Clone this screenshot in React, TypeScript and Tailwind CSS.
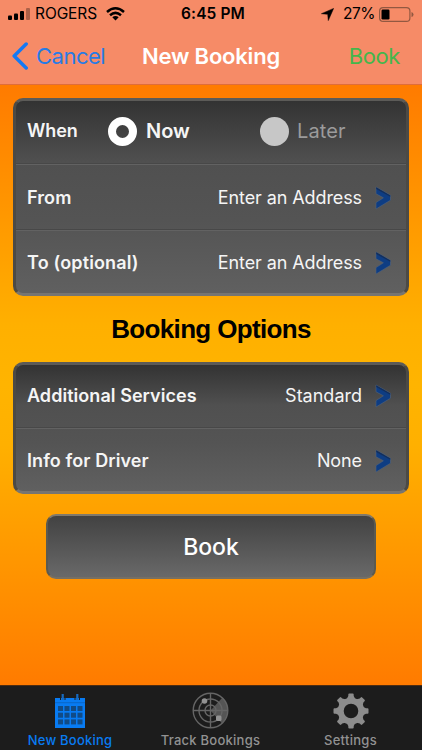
import React from "react";

function Chevron() {
  return (
    <svg className="ml-[13px] h-[24px] w-[17px] shrink-0" viewBox="0 0 17 24">
      <path d="M1 1 L15.5 9.2 V14.2 L1 23 V16.6 L8.4 11.8 L1 7.8 Z" fill="#0e3d83" stroke="#53637a" strokeWidth="0.6" />
      <path d="M1.2 1.2 L15.3 9.4 V10.8 L1.2 3 Z" fill="#142f5b" />
    </svg>
  );
}

function Row({ label, value, labelClass, valueClass, className }: { label: string; value: string; labelClass: string; valueClass: string; className: string }) {
  return (
    <div className={"flex items-center pl-[11px] pr-[14px] " + className}>
      <span className={"flex-1 font-semibold " + labelClass}>{label}</span>
      <span className={valueClass}>{value}</span>
      <Chevron />
    </div>
  );
}

const divider = "border-b border-[#484848] shadow-[0_1px_0_#626262]";
const card = "mx-[13px] rounded-[10px] border-[3px] border-t-[#5c5b58] border-x-[#4c4a45] border-b-[#777571] bg-[linear-gradient(#333_0%,#505050_32%,#545454_62%,#606060_100%)] text-[18px] leading-none text-[#f5f5f5]";

const teeth = [0, 45, 90, 135, 180, 225, 270, 315];

export default function App() {
  return (
    <div className="flex h-[750px] w-[422px] flex-col overflow-hidden whitespace-nowrap font-['Inter',sans-serif]">
      <header className="h-[85px] border-b border-[#df6d3a] bg-[#f68b67]">
        <div className="flex h-[28px] items-center text-[15.5px] leading-none text-black">
          <div className="flex w-[150px] items-center pl-2">
            <svg className="h-[12px] w-[22px]" viewBox="0 0 22 12">
              <rect x="0" y="7.5" width="4" height="4.5" rx="1" />
              <rect x="6" y="5.5" width="4" height="6.5" rx="1" />
              <rect x="12" y="3" width="4" height="9" rx="1" />
              <rect x="18" y="0" width="4" height="12" rx="1" opacity=".3" />
            </svg>
            <span className="ml-[5px] w-[64px] tracking-[-0.1px]">ROGERS</span>
            <svg className="ml-[7px] h-[14px] w-[19px]" viewBox="0 0 19 14" fill="none" stroke="#000" strokeWidth="2.5">
              <path d="M1 5 Q9.5 -2.4 18 5" />
              <path d="M4 8.2 Q9.5 3.5 15 8.2" />
              <path d="M6.3 10.3 Q9.5 7.6 12.7 10.3 L9.5 13.6Z" fill="#000" stroke="none" />
            </svg>
          </div>
          <span className="w-[126px] text-center font-semibold tracking-[0.1px]">6:45 PM</span>
          <div className="flex flex-1 items-center justify-end pr-[8px]">
            <svg className="h-[13px] w-[13px]" viewBox="0 0 13 13"><path d="M12.6 .4 L7.3 12.6 L6.7 6.3 L.4 5.7Z" stroke="#000" strokeWidth=".5" /></svg>
            <span className="ml-[9px] w-[32px] tracking-[-0.5px]">27%</span>
            <svg className="ml-[4px] h-[15px] w-[35px]" viewBox="0 0 35 15">
              <rect x=".6" y=".6" width="30.3" height="13.8" rx="3.5" fill="none" stroke="#925841" strokeWidth="1.2" />
              <rect x="2.5" y="2.5" width="8" height="10" rx="1.2" />
              <path d="M32.5 5 Q34.5 5.5 34.5 7.5 T32.5 10Z" fill="#925841" />
            </svg>
          </div>
        </div>
        <div className="flex h-[56px] items-center text-[22px] leading-none">
          <div className="flex w-[126px] items-center pl-[12px] text-[#277be5]">
            <svg className="h-[28px] w-[17px]" viewBox="0 0 17 28" fill="none" stroke="#1479f4" strokeWidth="3.5" strokeLinecap="round" strokeLinejoin="round"><path d="M14.2 2 L2.2 14 L14.2 26" /></svg>
            <span className="ml-[7px] tracking-[-0.5px]">Cancel</span>
          </div>
          <span className="w-[170px] text-center font-semibold tracking-[-0.2px] text-white">New Booking</span>
          <span className="flex-1 pr-[22px] text-right tracking-[-0.4px] text-[#45b64b]">Book</span>
        </div>
      </header>

      <main className="h-[600px] bg-[linear-gradient(#ff7b00,#ffb000_40%,#ffb400_50%,#ffb000_60%,#ff7b00)] pt-[13px]">
        <section className={card + " h-[198px]"}>
          <div className={"flex h-[63px] items-center pb-[2px] pl-[11px] " + divider}>
            <span className="w-[81px] font-semibold tracking-[-0.1px]">When</span>
            <span className="h-[29px] w-[29px] rounded-full border-[8px] border-white" />
            <span className="ml-[9px] w-[114px] text-[20px] font-semibold">Now</span>
            <span className="h-[29px] w-[29px] rounded-full bg-[#c7c7c7]" />
            <span className="ml-[8px] text-[20px] tracking-[0.1px] text-[#9b9b9b]">Later</span>
          </div>
          <Row className={"h-[66px] pt-[2px] " + divider} label="From" value="Enter an Address" labelClass="tracking-[0.1px]" valueClass="tracking-[-0.1px]" />
          <Row className="h-[63px] pt-[3px]" label="To (optional)" value="Enter an Address" labelClass="tracking-[0.15px]" valueClass="tracking-[-0.1px]" />
        </section>

        <h2 className="flex h-[66px] items-center justify-center font-['Liberation_Sans',sans-serif] text-[26px] font-bold leading-none tracking-[-0.65px] text-black">Booking Options</h2>

        <section className={card + " h-[132px]"}>
          <Row className={"h-[63px] " + divider} label="Additional Services" value="Standard" labelClass="tracking-[0.05px]" valueClass="tracking-[0px]" />
          <Row className="h-[63px] pt-[3px]" label="Info for Driver" value="None" labelClass="tracking-[0.1px]" valueClass="tracking-[-0.1px]" />
        </section>

        <button className="mx-auto mt-[20px] flex h-[65px] w-[330px] items-center justify-center rounded-[10px] border-2 border-x-[#5b5a50] border-b-[#777063] border-t-[#80796b] bg-[linear-gradient(#424242,#696969)] pt-[2px] text-[23px] font-medium leading-none text-white">Book</button>
      </main>

      <nav className="flex h-[65px] border-t border-[#4e2c11] bg-[#1c1c1c] text-[13px] font-medium leading-none text-[#929292]">
        <div className="flex w-[140px] flex-col items-center pt-[8px] text-[#087bf2]">
          <svg className="h-[34px] w-[32px]" viewBox="0 0 32 34">
            <path d="M1 4H31V34H1Z" fill="#087bf2" />
            <path d="M6.5 0V6M11 2V6M21 2V6M25.5 0V6" stroke="#1c1c1c" strokeWidth="1" />
            <path d="M8.7 0V6M23.3 0V6" stroke="#1769bd" strokeWidth="2.2" />
            <path d="M1 8.7H31" stroke="#0967c8" strokeWidth="1" />
            {[0, 1, 2].map((r) => [0, 1, 2, 3].map((c) => <rect key={`${r}-${c}`} x={4 + c * 6.5} y={12 + r * 6.7} width="5" height="5" fill="#114b86" />))}
          </svg>
          <span className="mt-[6px] tracking-[0.2px]">New Booking</span>
        </div>
        <div className="flex w-[141px] flex-col items-center pt-[6px]">
          <svg className="h-[37px] w-[37px]" viewBox="0 0 37 37" fill="none" stroke="#656565" strokeWidth="1.4">
            <path d="M18.5 18.5 L30.5 5.5 A17.5 17.5 0 0 1 30 31.5Z" fill="#555" stroke="none" />
            <circle cx="18.5" cy="18.5" r="17.3" /><circle cx="18.5" cy="18.5" r="11.5" /><circle cx="18.5" cy="18.5" r="5.5" />
            <path d="M1 18.5H36M18.5 1V36" />
            <circle cx="12.5" cy="9" r="2.8" fill="#929292" stroke="none" />
            <rect x="24" y="23.5" width="5.5" height="5.5" rx="1.5" fill="#929292" stroke="none" />
          </svg>
          <span className="mt-[5px] tracking-[0.25px]">Track Bookings</span>
        </div>
        <div className="flex w-[139px] flex-col items-center pt-[7px]">
          <svg className="h-[36px] w-[36px]" viewBox="-18 -18 36 36" fill="#8c8c8c">
            <circle r="10.3" fill="none" stroke="#8c8c8c" strokeWidth="6" />
            {teeth.map((a) => <path key={a} transform={`rotate(${a})`} d="M-4.6 -11.5 L-2.7 -15 V-16.5 Q-2.7 -17.5 -1.7 -17.5 H1.7 Q2.7 -17.5 2.7 -16.5 V-15 L4.6 -11.5Z" />)}
          </svg>
          <span className="mt-[5px] tracking-[0.3px]">Settings</span>
        </div>
      </nav>
    </div>
  );
}
